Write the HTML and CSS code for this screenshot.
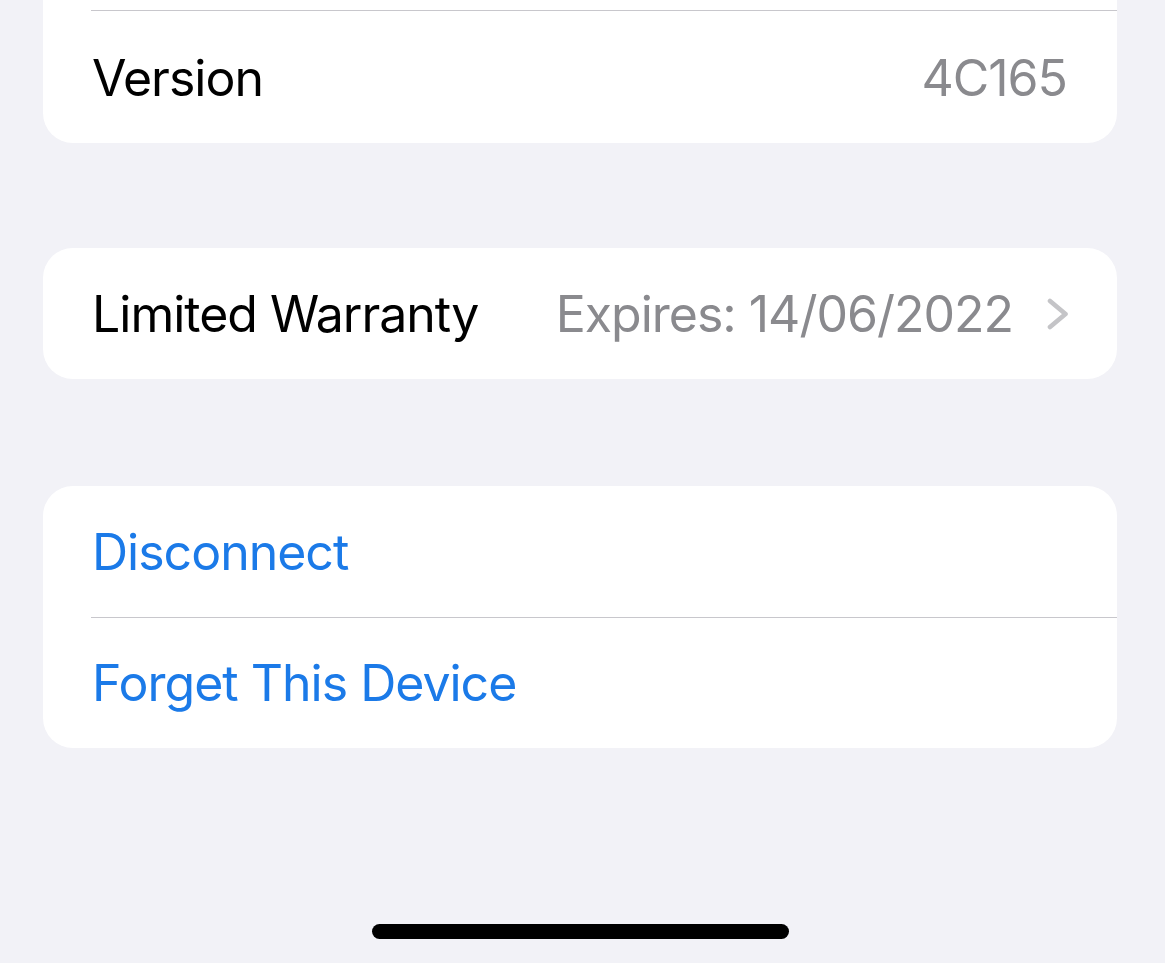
FILE: index.html
```html
<!DOCTYPE html>
<html lang="en">
<head>
<meta charset="utf-8">
<title>Device</title>
<link rel="stylesheet" href="styles.css">
</head>
<body>
<main class="screen">
  <section class="group group-top">
    <div class="row-clip"></div>
    <div class="row row-tall">
      <span class="label">Version</span>
      <span class="value">4C165</span>
    </div>
  </section>

  <section class="group">
    <div class="row">
      <span class="label">Limited Warranty</span>
      <span class="detail">
        <span class="value">Expires: 14/06/2022</span>
        <svg class="chevron" width="22" height="32" viewBox="0 0 22 32" aria-hidden="true">
          <path d="M3 3 L18.5 16 L3 29" fill="none" stroke="#c4c4c7" stroke-width="4.6" stroke-linecap="round" stroke-linejoin="round"/>
        </svg>
      </span>
    </div>
  </section>

  <section class="group group-actions">
    <div class="row">
      <span class="action">Disconnect</span>
    </div>
    <div class="row">
      <span class="action">Forget This Device</span>
    </div>
  </section>

  <div class="home-bar"><span class="home-indicator"></span></div>
</main>
</body>
</html>
```
FILE: styles.css
```css
html, body {
  margin: 0;
  padding: 0;
  background: #f2f2f7;
}

body {
  font-family: Inter, "Noto Sans", "Liberation Sans", sans-serif;
  color: #000;
  -webkit-font-smoothing: antialiased;
}

.screen {
  width: 1165px;
  height: 963px;
  padding: 0 48px 0 43px;
  box-sizing: border-box;
  display: flex;
  flex-direction: column;
  gap: 105px;
  overflow: hidden;
}

.group {
  background: #fff;
  border-radius: 30px;
  display: flex;
  flex-direction: column;
}

.group-top {
  border-top-left-radius: 0;
  border-top-right-radius: 0;
}

.group-actions {
  margin-top: 2px;
}

.row-clip {
  height: 10px;
}

.row {
  height: 131px;
  display: flex;
  align-items: center;
  justify-content: space-between;
  padding: 0 50px 0 49px;
  box-sizing: border-box;
  font-size: 50px;
  letter-spacing: -1px;
}

.row-tall {
  height: 133px;
  padding-top: 2px;
}

.row + .row,
.row-clip + .row {
  border-top: 1.5px solid #c8c7cc;
  margin-left: 48px;
  padding-left: 1px;
}

.label {
  color: #000;
}

.value {
  color: #8a8a8e;
}

.detail {
  display: flex;
  align-items: center;
  gap: 34px;
}

.chevron {
  display: block;
  margin-right: -2px;
}

.action {
  color: #1b7ae8;
}

.home-bar {
  flex: 1;
  display: flex;
  align-items: flex-end;
  justify-content: center;
  padding-bottom: 24px;
}

.home-indicator {
  width: 417px;
  height: 15px;
  border-radius: 8px;
  background: #000;
}
```
